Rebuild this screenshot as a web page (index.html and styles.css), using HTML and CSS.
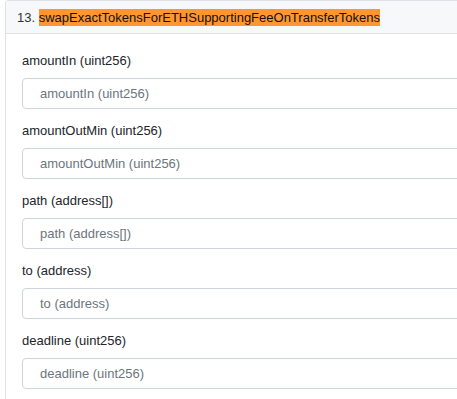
FILE: index.html
```html
<!DOCTYPE html>
<html>

<head>
    <title>swapExactTokensForETHSupportingFeeOnTransferTokens</title>
    <link rel="stylesheet" href="styles.css">
</head>

<body>
    <div class="card">
        <div class="card-header">13. <span class="hit">swapExactTokensForETHSupportingFeeOnTransferTokens</span></div>
        <div class="card-body">
            <div class="field">
                <label>amountIn (uint256)</label>
                <input type="text" placeholder="amountIn (uint256)">
            </div>
            <div class="field">
                <label>amountOutMin (uint256)</label>
                <input type="text" placeholder="amountOutMin (uint256)">
            </div>
            <div class="field">
                <label>path (address[])</label>
                <input type="text" placeholder="path (address[])">
            </div>
            <div class="field">
                <label>to (address)</label>
                <input type="text" placeholder="to (address)">
            </div>
            <div class="field">
                <label>deadline (uint256)</label>
                <input type="text" placeholder="deadline (uint256)">
            </div>
        </div>
    </div>
</body>

</html>
```
FILE: styles.css
```css
body {
    margin: 0;
    overflow: hidden;
    font-family: "Liberation Sans", Arial, sans-serif;
    font-size: 13px;
    line-height: 21px;
    color: #212529;
    background: #fff;
}

.card {
    margin-left: 5px;
    width: 640px;
    border: 1px solid #dfe1e5;
    border-radius: 3px;
}

.card-header {
    background-color: #f7f8fa;
    border-bottom: 1px solid #dfe1e5;
    padding: 6px 11px 5px;
    color: #333;
}

.hit {
    background-color: #ff9632;
    color: #111;
    padding: 1px 0;
}

.card-body {
    padding: 16px;
}

.field {
    margin-bottom: 11px;
}

.field label {
    display: block;
    margin-bottom: 7px;
}

.field input {
    display: block;
    box-sizing: border-box;
    width: 100%;
    height: 31px;
    padding: 0 17px;
    border: 1px solid #ced4da;
    border-radius: 4px;
    font-family: inherit;
    font-size: 13px;
    color: #495057;
}

.field input::placeholder {
    color: #6c757d;
}
```
